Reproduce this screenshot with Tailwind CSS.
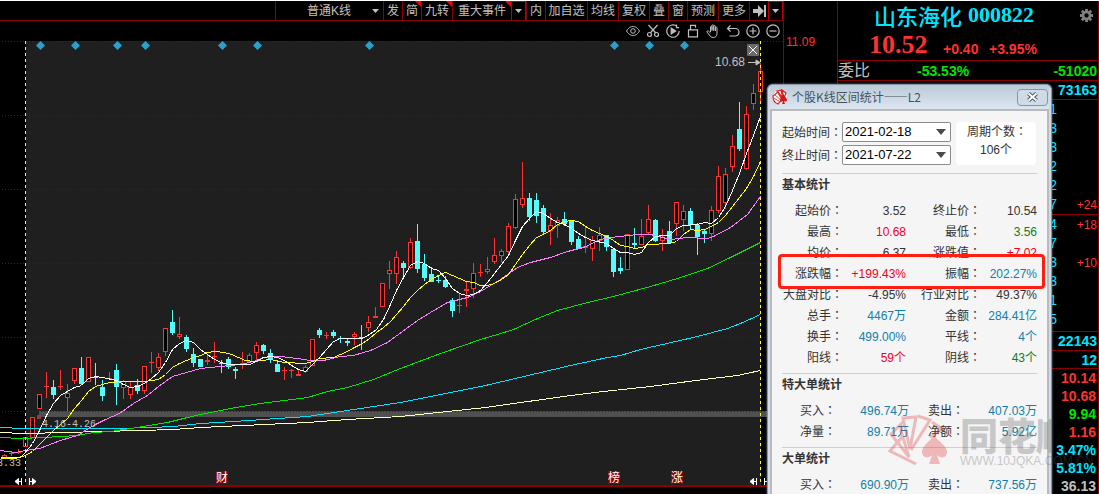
<!DOCTYPE html>
<html lang="zh-CN">
<head>
<meta charset="utf-8">
<title>山东海化 000822</title>
<script src="https://cdn.jsdelivr.net/npm/@tailwindcss/browser@4"></script>
</head>
<body class="bg-black">
<div class="relative flex h-screen overflow-hidden border-t border-white bg-black font-['Liberation_Sans','Noto_Sans_CJK_SC',sans-serif] text-xs text-[#c0c0c0]">

  <main class="min-w-0 flex-1 border-r border-[#8b0000]">
    <nav aria-label="图表工具" class="flex h-5 justify-end border-b border-[#8b0000] leading-5 whitespace-nowrap">
      <button class="relative w-[108px] border-l border-[#8b0000] pr-px">普通K线<svg class="absolute top-[8px] right-[4px] h-1 w-[7px]" viewBox="0 0 7 4"><path d="M0 0h7L3.500 4z" fill="#c0c0c0"/></svg></button>
      <button class="w-[19px] border-l border-[#8b0000]">发</button>
      <button class="relative w-[19px] border-l border-[#8b0000]">简<svg class="absolute top-0 right-0 size-[6px]" viewBox="0 0 6 6"><path d="M0 0h6v6z" fill="#f00"/></svg></button>
      <button class="relative w-[31px] border-l border-[#8b0000]">九转<svg class="absolute top-0 right-0 size-[6px]" viewBox="0 0 6 6"><path d="M0 0h6v6z" fill="#f00"/></svg></button>
      <button class="relative w-[59px] border-l border-[#8b0000]">重大事件<svg class="absolute top-0 right-0 size-[6px]" viewBox="0 0 6 6"><path d="M0 0h6v6z" fill="#f00"/></svg></button>
      <button aria-label="展开事件" class="flex w-[15px] items-center justify-center border border-b-0 border-[#c00000]"><svg class="h-1 w-[7px]" viewBox="0 0 7 4"><path d="M0 0h7L3.500 4z" fill="#c0c0c0"/></svg></button>
      <button class="w-[19px] border-l border-[#8b0000]">内</button>
      <button class="w-[42px] border-l border-[#8b0000]">加自选</button>
      <button class="w-[31px] border-l border-[#8b0000]">均线</button>
      <button class="w-[31px] border-l border-[#8b0000]">复权</button>
      <button class="w-[19px] border-l border-[#8b0000]">叠</button>
      <button class="w-[19px] border-l border-[#8b0000]">窗</button>
      <button class="w-[31px] border-l border-[#8b0000]">预测</button>
      <button class="w-[31px] border-l border-[#8b0000]">更多</button>
      <button aria-label="到最新" class="flex w-[19px] items-center justify-center border-l border-[#8b0000]"><svg class="h-3 w-[13px]" viewBox="0 0 13 12"><path d="M0 4h5V0l6 6-6 6V8H0zM11 0h2v12h-2z" fill="#c0c0c0"/></svg></button>
      <button aria-label="更多工具" class="flex w-[15px] items-center justify-center border border-b-0 border-[#c00000]"><svg class="h-1 w-[7px]" viewBox="0 0 7 4"><path d="M0 0h7L3.500 4z" fill="#c0c0c0"/></svg></button>
    </nav>

    <div role="toolbar" aria-label="画图工具" class="flex h-5 items-center justify-end gap-[6px] pr-[3px]">
      <button aria-label="显示"><svg class="size-[14px]" viewBox="0 0 14 14" fill="none" stroke="#c0c0c0"><path d="M.5 7C3 3.200 5 2.500 7 2.500S11 3.200 13.500 7C11 10.800 9 11.500 7 11.500S3 10.800.5 7z"/><circle cx="7" cy="7" r="2.300"/></svg></button>
      <button aria-label="剪切"><svg class="size-[14px]" viewBox="0 0 14 14" fill="none" stroke="#c0c0c0" stroke-width="1.200"><path d="M2.500 1 9.800 9M11.500 1 4.200 9"/><circle cx="3.500" cy="10.500" r="2"/><circle cx="10.500" cy="10.500" r="2"/></svg></button>
      <button aria-label="回放"><svg class="size-[14px]" viewBox="0 0 14 14" fill="none" stroke="#c0c0c0" stroke-width="1.200"><path d="M11 2.300A6.200 6.200 0 1 0 13.200 7"/><path d="M10.500.5v3.200H13"/><path d="M5.200 4v6l4.500-3z" fill="#c0c0c0"/></svg></button>
      <button aria-label="锁定"><svg class="size-[14px]" viewBox="0 0 14 14" fill="none" stroke="#c0c0c0" stroke-width="1.200"><path d="M2.500 5.800h9v7h-9zM4.500 5.800V1.300h5v2.500"/></svg></button>
      <button aria-label="拖动"><svg class="size-[14px]" viewBox="0 0 14 14" fill="none" stroke="#c0c0c0"><path d="M4.500 8V3c0-1 1.500-1 1.500 0v3.500V1.500c0-1 1.700-1 1.700 0v5V2.300c0-1 1.700-1 1.700 0V7 3.800c0-1 1.600-1 1.600 0V9.500c0 2.500-1.500 4-3.700 4-2 0-3-1-4-2.500L1 8c-.5-1 .7-1.600 1.400-1l2.100 2"/></svg></button>
      <button aria-label="撤销"><svg class="size-[14px]" viewBox="0 0 14 14" fill="none" stroke="#c0c0c0" stroke-width="1.200"><path d="M4.500 1.500 1.500 4.500l3 3M1.500 4.500h7.800a3.500 3.500 0 0 1 0 7.500H3.500"/></svg></button>
      <button aria-label="放大"><svg class="size-[14px]" viewBox="0 0 14 14" fill="none" stroke="#c0c0c0" stroke-width="1.200"><circle cx="7" cy="7" r="6.200"/><path d="M3.500 7h7M7 3.500v7"/></svg></button>
      <button aria-label="缩小"><svg class="size-[14px]" viewBox="0 0 14 14" fill="none" stroke="#c0c0c0" stroke-width="1.200"><circle cx="7" cy="7" r="6.200"/><path d="M3.500 7h7"/></svg></button>
    </div>

    <svg id="chart" role="img" aria-label="日K线图" class="block h-auto w-full" viewBox="0 41 783 453" fill="none">
      <rect x="26" y="41" width="735" height="445" fill="#1f1f1f"/>
      <rect x="39" y="411" width="729" height="6" fill="#505050"/>
      <g stroke="#8b0000" stroke-dasharray="1 2" shape-rendering="crispEdges">
        <path d="M2 41.500H783M2 115.500H765M2 189.500H765M2 263.500H765M2 337.500H765M2 411.500H765"/>
      </g>
      <rect x="0" y="485" width="783" height="2" fill="#8b0000"/>
      <g id="marks" fill="#2aa0cf"></g>
      <g id="candles" shape-rendering="crispEdges"></g>
      <g id="averages" shape-rendering="crispEdges"></g>
      <path d="M25.500 41V485M760.500 41V485" stroke="#ff0" stroke-dasharray="3 3" shape-rendering="crispEdges"/>
      <rect x="37" y="415" width="4" height="4" fill="#8b4040"/>
      <g fill="#c0c0c0" font-size="10" font-family="'Liberation Mono',monospace">
        <text x="42" y="427">4.16-4.26</text>
        <text x="-3" y="466">3.33</text>
      </g>
      <text x="715" y="66" fill="#c0c0c0" font-size="12" font-family="'Liberation Sans',sans-serif">10.68</text>
      <path d="M748 62.500h11M756 60l4 2.500-4 2.500z" stroke="#c0c0c0" fill="#c0c0c0"/>
      <rect x="747" y="44" width="12" height="12" rx="1" fill="#6a6a6a"/>
      <path d="M749 46l8 8M757 46l-8 8" stroke="#fff"/>
      <g stroke="#fff" fill="#fff">
        <path d="M15 481.500h6M21.500 478v7M15 481.500l3.500-3v6zM29.500 478v7M30 481.500h6M36 481.500l-3.500-3v6zM750 481.500h6M756.500 478v7M750 481.500l3.500-3v6zM764.500 478v7M765 481.500h3"/>
      </g>
      <g font-size="12" fill="#8b0000" font-family="'Noto Sans CJK SC',sans-serif">
        <path d="M216 471h12v13h-12zM608 471h12v13h-12zM671 471h12v13h-12z"/>
        <g fill="#fff"><text x="216" y="482">财</text><text x="608" y="482">榜</text><text x="671" y="482">涨</text></g>
      </g>
    </svg>
  </main>

  <div class="w-[53px] shrink-0 pt-[33px] pl-[2px] text-xs leading-4 text-[#ff3232]">11.09</div>

  <aside class="w-[262px] shrink-0 border-x border-[#8b0000] text-sm font-bold">
    <header class="h-[60px] border-b border-[#8b0000]">
      <div class="flex h-7 items-center justify-end pr-1 text-[#00e5ff]">
        <h1 class="flex flex-1 items-center justify-center gap-[6px] pl-[18px] text-[22px] leading-7"><span class="font-['Noto_Sans_CJK_SC',sans-serif] font-medium">山东海化</span><span class="font-['Liberation_Serif',serif]">000822</span></h1>
        <button aria-label="设置" class="ml-[27px]"><svg class="size-[15px]" viewBox="0 0 16 16"><g stroke="#808080" stroke-width="3"><path d="M8 1v14M1 8h14M3 3l10 10M13 3 3 13"/></g><circle cx="8" cy="8" r="5" fill="#808080"/><circle cx="8" cy="8" r="2.300" fill="#000"/></svg></button>
      </div>
      <div class="flex h-8 items-end pl-[31px] leading-6 text-[#ff3232]">
        <span class="w-[74px] font-['Liberation_Serif',serif] text-[26px] leading-8">10.52</span>
        <span class="w-[46px]">+0.40</span><span>+3.95%</span>
      </div>
    </header>
    <div class="flex h-5 items-center border-b border-[#8b0000] pr-px text-[#00e600]">
      <span class="w-[79px] text-base font-normal text-[#c0c0c0]">委比</span><span>-53.53%</span><span class="ml-auto">-51020</span>
    </div>
    <div class="flex h-[19px] items-center justify-end border-b border-[#8b0000] pr-px leading-[18px] text-[#00e5ff]">73163</div>
    <div id="asks" class="border-b border-[#8b0000] text-[#00e5ff]"></div>
    <div id="bids" class="border-b border-[#8b0000] pb-[2px] text-[#00e5ff]"></div>
    <div class="flex h-[19px] items-center justify-end border-b border-[#8b0000] pr-px text-[#00e5ff]">22143</div>
    <div class="flex h-[18px] items-center justify-end border-b border-[#8b0000] pr-px text-[#00e5ff]">12</div>
    <ul class="pr-[2px] text-right leading-[18px]">
      <li class="text-[#ff3232]">10.14</li><li class="text-[#ff3232]">10.68</li><li class="text-[#00e600]">9.94</li><li class="text-[#ff3232]">1.16</li><li class="text-[#00e5ff]">3.47%</li><li class="text-[#00e5ff]">5.81%</li><li class="text-[#c0c0c0]">36.13</li>
    </ul>
  </aside>

  <section role="dialog" aria-labelledby="dlg" class="absolute top-[83px] right-[47px] bottom-0 flex w-[285px] flex-col overflow-hidden rounded-t-md border border-b-0 border-[#8594a3] bg-[#cfdae5] px-[2px] text-[#333] shadow-[0_0_2px_#8fa5bd]">
    <div class="flex h-6 shrink-0 items-center bg-linear-to-b from-[#bccbd9] to-[#dbe5ef] pl-[2px]">
      <svg class="size-4" viewBox="0 0 16 16"><circle cx="8" cy="8" r="7" fill="#fff"/><path d="M1 7l5-4 4 8-4 4C3 14 1 11 1 7zM5 2l4-1 2 8zM10 1l4 3-2 5z" fill="#fff" stroke="#d22" stroke-width="1.200"/><path d="M3 6l6 5M5 3l5 7M2 9l6 4" stroke="#e44"/><path d="M11.500 6c-1.500 2-3.500 3-3.500 5 0 1.800 2 2 3 1l-1 3h3l-1-3c1 1 3 .8 3-1 0-2-2-3-3.500-5z" fill="#d01818"/></svg>
      <h2 id="dlg" class="flex-1 pl-1 font-['Noto_Sans_CJK_SC',sans-serif] text-xs text-[#44525f]">个股K线区间统计——L2</h2>
      <button aria-label="关闭" class="mr-px flex h-[17px] w-[31px] items-center justify-center rounded-sm border border-[#8496ad] bg-[#d0dbe8]"><svg class="h-[10px] w-[13px]" viewBox="0 0 13 10"><path d="M2.500 1.500l8 7M10.500 1.500l-8 7" stroke="#4a5560" stroke-width="4"/><path d="M2.500 1.500l8 7M10.500 1.500l-8 7" stroke="#fff" stroke-width="2"/></svg></button>
    </div>
    <div class="flex-1 overflow-hidden border-2 border-b-0 border-[#b9bbbd] bg-[#f5f5f5] px-[10px] pt-[11px]">
      <form class="flex items-start">
        <div class="flex flex-col gap-[3px]">
          <div class="flex h-5 items-center"><label for="from" class="w-[60px] leading-4 whitespace-nowrap">起始时间<span lang="zh-TW" class="font-['Noto_Sans_CJK_TC',sans-serif]">：</span></label>
            <span class="relative"><select id="from" class="block h-5 w-[109px] appearance-none rounded-xs border border-[#8c8c8c] bg-white pl-[2px] text-[13px] leading-[18px] text-black"><option>2021-02-18</option></select><svg class="pointer-events-none absolute top-[7px] right-[5px] h-[6px] w-[10px]" viewBox="0 0 10 6"><path d="M0 0h10L5 6z" fill="#4a4a4a"/></svg></span></div>
          <div class="flex h-5 items-center"><label for="to" class="w-[60px] leading-4 whitespace-nowrap">终止时间<span lang="zh-TW" class="font-['Noto_Sans_CJK_TC',sans-serif]">：</span></label>
            <span class="relative"><select id="to" class="block h-5 w-[109px] appearance-none rounded-xs border border-[#8c8c8c] bg-white pl-[2px] text-[13px] leading-[18px] text-black"><option>2021-07-22</option></select><svg class="pointer-events-none absolute top-[7px] right-[5px] h-[6px] w-[10px]" viewBox="0 0 10 6"><path d="M0 0h10L5 6z" fill="#4a4a4a"/></svg></span></div>
        </div>
        <p class="ml-[5px] h-[43px] w-[80px] rounded-sm bg-white text-center leading-[18px]"><span class="pl-[2px]">周期个数<span lang="zh-TW" class="font-['Noto_Sans_CJK_TC',sans-serif]">：</span></span><br>106个</p>
      </form>
      <hr class="mt-2 border-[#cfcfcf]">
      <h3 class="h-[26px] leading-[23px] font-bold">基本统计</h3>
      <table id="basic" class="w-full"></table>
      <hr class="mt-[5px] border-[#cfcfcf]">
      <h3 class="h-[26px] leading-[23px] font-bold">特大单统计</h3>
      <table id="huge" class="w-full"></table>
      <hr class="mt-[5px] border-[#cfcfcf]">
      <h3 class="h-[26px] leading-[23px] font-bold">大单统计</h3>
      <table id="large" class="w-full"></table>
    </div>
  </section>

  <div class="absolute top-[253px] right-[54px] h-[35px] w-[267px] rounded-sm border-[3px] border-[#ff1e10]"></div>

  <div class="absolute top-[412px] left-[888px] flex items-start gap-[12px] opacity-30">
    <svg class="h-[54px] w-[60px]" viewBox="0 0 60 54" fill="none" stroke="#e03030" stroke-width="3"><path d="M14 24 2 38l26 13"/><path d="M13 11 3 21l18 23-8-26zM15 5l13-1-6 32zM30 3l12 4-19 30M44 9l10 7-12 8"/><path d="M46 22c-4 7-12 10-12 17 0 6 7 7 10 3l-3 9h11l-3-9c4 4 10 3 10-3 0-7-9-10-13-17z" fill="#e03030" stroke="none"/></svg>
    <div class="whitespace-nowrap text-[#606060]">
      <p class="font-['Noto_Sans_CJK_SC',sans-serif] text-[38px] leading-[42px] font-black">同花<span class="inline-block w-[16px] overflow-hidden align-top">顺</span></p>
      <p class="text-xs leading-3">WWW.10JQKA.COM.CN</p>
    </div>
  </div>
</div>

<script>
// [high, low, body top, body bottom, 1 = up / 0 = down], 7px apart, first bar at x = 4
const bars = [
[454,459,455,458,1],[452,456,453,454,1],[449,454,452,453,1],[437,447,437,447,1],[417,438,417,438,1],[394,409,394,409,1],
[372,398,386,387,1],[380,399,387,395,0],[370,390,386,387,1],[384,411,393,398,1],[368,384,368,381,1],[357,385,368,384,0],
[357,382,357,382,1],[363,385,377,378,0],[380,401,387,396,0],[372,380,378,379,1],[364,405,370,387,0],[380,399,381,388,1],
[381,399,387,395,1],[379,394,385,391,0],[366,394,366,391,1],[352,373,362,363,1],[353,371,357,368,1],[328,356,328,352,1],
[310,335,322,333,0],[317,339,334,337,1],[335,352,337,349,0],[348,367,354,363,0],[359,367,359,367,0],[355,365,360,362,1],
[342,363,356,357,1],[360,373,363,364,0],[357,369,359,367,0],[367,379,369,371,0],[352,369,363,365,1],[353,363,355,362,1],
[342,360,345,353,1],[344,354,345,351,0],[349,363,353,360,0],[361,372,364,372,0],[367,380,370,371,1],[369,378,370,371,1],
[369,376,374,376,1],[365,373,367,372,1],[339,366,339,366,1],[328,338,330,335,0],[332,339,335,336,1],[330,338,332,336,0],
[336,343,338,339,0],[339,346,341,343,0],[332,345,334,337,1],[325,350,337,338,0],[316,332,322,328,1],[307,318,316,318,1],
[283,307,283,307,1],[261,289,270,274,1],[251,284,257,274,1],[261,278,263,268,0],[238,269,242,268,1],[224,273,241,269,0],
[254,281,264,278,0],[267,282,274,282,0],[275,283,280,281,0],[276,288,280,287,0],[298,317,300,311,0],[294,313,305,306,1],
[282,307,289,291,1],[263,298,273,289,1],[264,277,272,273,1],[257,274,269,272,1],[238,264,255,262,1],[249,262,251,256,1],
[223,255,226,252,1],[194,229,199,228,1],[162,208,198,205,1],[193,221,198,217,0],[193,223,200,216,0],[205,234,208,232,0],
[213,245,225,231,1],[217,238,220,226,1],[212,226,219,224,0],[220,245,221,242,0],[236,249,239,249,0],[226,253,246,248,1],
[236,261,240,249,1],[227,251,235,241,1],[235,251,235,247,0],[249,277,249,272,0],[257,274,268,271,0],[234,270,234,270,1],
[228,248,243,245,0],[219,245,236,245,1],[205,234,219,233,1],[219,242,220,241,0],[229,251,237,241,1],[221,243,231,243,0],
[202,236,202,224,1],[205,231,211,220,1],[208,230,211,225,0],[223,255,225,237,0],[229,243,231,234,0],[206,241,210,234,1],
[166,213,176,211,1],[168,209,174,203,1],[135,172,146,167,1],[102,151,129,149,0],[106,170,114,169,1],[84,110,93,104,1],
[63,101,71,92,1]];
let out = '';
bars.forEach(([hi, lo, top, bot, up], i) => {
  const x = 4 + 7 * i, color = up ? '#ff3232' : '#54fcfc';
  out += `<path d="M${x + .5} ${hi}V${lo}" stroke="${color}"/>`;
  out += up && bot - top > 2
    ? `<rect x="${x - 1.5}" y="${top + .5}" width="4" height="${bot - top - 1}" fill="#000" stroke="${color}"/>`
    : `<rect x="${x - 2}" y="${top}" width="5" height="${bot - top}" fill="${color}"/>`;
});
document.getElementById('candles').innerHTML = out;

const averages = {
'#ffffc0': '0,432 23,433 67,432 100,431 140,430 173,429 200,427 307,422 347,419 400,416 485,407 570,395 603,391 650,386 703,379 737,375 760,370',
'#00e5ff': '0,427 23,428 117,428 150,427 173,426 200,423 233,421 307,416 340,411 400,402 485,385 570,365 607,357 620,355 640,349 697,336 727,328 740,323 760,314',
'#00e600': '0,437 20,438 43,437 77,435 93,432 110,431 143,426 167,422 187,417 200,414 230,408 260,403 307,397 327,391 347,387 373,379 400,368 440,353 463,345 480,339 497,334 513,329 537,318 557,310 587,302 613,296 650,286 677,278 707,268 730,257 760,242',
'#ff80ff': '0,450 15,452 25,450 39,448 60,440 77,435 88,428 95,424 105,419 119,413 133,403 147,395 158,386 165,381 172,376 186,372 200,368 220,366 240,364 253,361 263,357 280,356 297,358 310,360 323,360 340,356 353,355 370,350 387,342 402,331 417,320 430,312 447,302 467,297 480,291 500,279 510,272 517,267 530,262 550,257 567,251 583,247 600,239 610,237 637,234 650,234 670,239 687,237 707,238 713,236 730,227 747,214 760,196',
'#ffff00': '0,458 15,458 25,455 32,451 39,444 46,437 53,430 60,424 67,418 74,408 81,400 88,391 95,386 102,384 109,382 123,381 144,381 158,379 165,374 172,367 179,363 186,360 193,357 200,355 207,352 214,351 224,352 231,354 238,357 245,360 254,361 270,359 284,362 305,363 312,361 319,358 333,357 340,354 347,351 354,347 362,343 369,338 376,332 383,327 390,321 403,306 410,297 417,290 424,284 431,279 438,275 445,272 452,275 466,281 473,282 480,285 487,285 494,283 501,279 508,274 515,264 522,254 529,245 536,237 543,234 550,230 557,224 564,221 571,220 578,221 585,226 592,230 599,233 606,236 613,240 620,245 627,246 634,248 641,247 648,244 669,243 676,241 683,234 690,229 697,230 704,229 711,226 718,222 725,215 732,206 739,197 746,188 753,176 760,161',
'#ffffff': '0,457 20,457 25,452 32,443 39,430 46,415 53,403 60,395 67,391 74,387 81,385 88,378 95,376 102,377 116,380 123,384 130,387 137,386 144,383 151,378 158,372 165,362 172,349 179,343 186,340 193,342 200,349 207,354 214,359 221,362 228,364 249,364 256,361 263,357 270,356 277,357 284,360 291,365 298,369 305,371 312,364 319,357 326,349 333,341 340,338 347,338 362,338 369,334 376,329 383,319 390,304 396,290 403,277 410,265 417,261 424,263 431,268 438,270 445,278 452,288 459,293 466,295 473,294 480,290 487,282 494,273 501,264 508,255 515,240 522,226 529,218 536,211 543,213 550,218 557,222 564,224 571,228 578,233 585,237 592,240 606,243 613,248 620,252 627,252 634,254 641,252 648,242 655,236 662,235 669,235 676,228 683,225 697,224 704,222 711,223 718,217 725,206 732,190 739,173 746,153 753,135 760,116'
};
document.getElementById('averages').innerHTML = Object.entries(averages)
  .map(([c, p]) => `<polyline transform="translate(.5 .5)" points="${p}" stroke="${c}"/>`).join('');
document.getElementById('marks').innerHTML = [40,75,117,145,222,257,369,614,649,684]
  .map(x => `<path d="M${x + .5} 41l4.500 4.500-4.500 4.500-4.500-4.500z"/>`).join('');

const level = ([d, chg]) => `<div class="flex h-[19px] items-center justify-end pr-px leading-[19px]"><span class="w-3 text-right font-normal">${d}</span><span class="w-[40px] text-right text-xs font-normal text-[#ff3232]">${chg}</span></div>`;
document.getElementById('asks').innerHTML = [['1',''],['3',''],['3',''],['2',''],['2',''],['7','+24']].map(level).join('');
document.getElementById('bids').innerHTML = [['4','+18'],['7',''],['3','+10'],['3',''],['1',''],['5','']].map(level).join('');

const K = 'text-[#333]', R = 'text-[#f0001e]', G = 'text-[#0a7d1e]', B = 'text-[#1080a8]';
const colon = `<span lang="zh-TW" class="font-['Noto_Sans_CJK_TC',sans-serif]">：</span>`;
const table = (id, rows, c) => document.getElementById(id).innerHTML = rows.map(([a, av, ac, b, bv, bc]) =>
  `<tr class="h-[21px] leading-4 whitespace-nowrap"><th class="${c[0]} p-0 text-right font-normal">${a}${colon}</th><td class="${c[1]} p-0 text-right ${ac}">${av}</td><th class="${c[2]} p-0 text-right font-normal">${b}${colon}</th><td class="p-0 text-right ${bc}">${bv}</td></tr>`).join('');
table('basic', [
  ['起始价','3.52',K,'终止价','10.54',K],['最高','10.68',R,'最低','3.56',G],['均价','6.37',K,'涨跌值','+7.02',R],
  ['涨跌幅','+199.43%',R,'振幅','202.27%',B],['大盘对比','-4.95%',K,'行业对比','49.37%',K],['总手','4467万',B,'金额','284.41亿',B],
  ['换手','499.00%',B,'平线','4个',B],['阳线','59个',R,'阴线','43个',G]], ['w-[61px]','w-[63px]','w-[75px]']);
const wide = ['w-[54px]','w-[73px]','w-[55px]'];
table('huge', [['买入','496.74万',B,'卖出','407.03万',B],['净量','89.71万',B,'净额','5.92亿',B]], wide);
table('large', [['买入','690.90万',B,'卖出','737.56万',B]], wide);
</script>
</body>
</html>
